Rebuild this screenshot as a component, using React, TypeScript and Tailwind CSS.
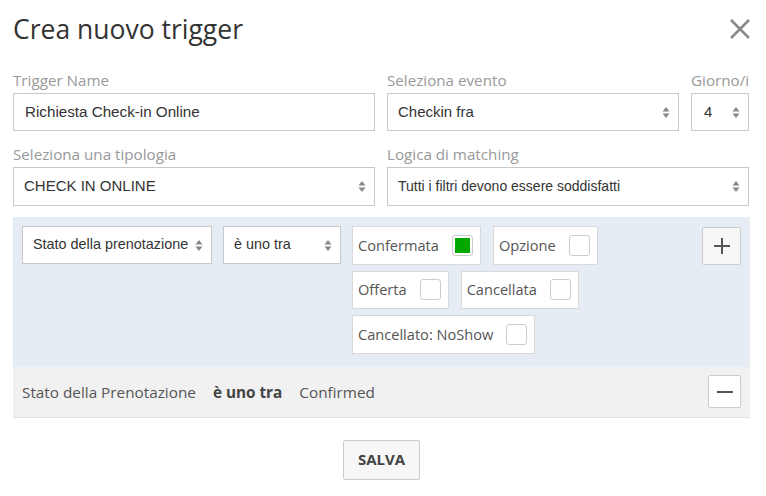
import React from 'react';

const Arrows = () => (
  <svg width="8" height="13" viewBox="0 0 8 13" className="shrink-0">
    <path d="M4 1 L7.5 5.5 H0.5 Z" fill="#888" />
    <path d="M4 12 L7.5 7.5 H0.5 Z" fill="#888" />
  </svg>
);

const FakeSelect: React.FC<{ value: string; className?: string }> = ({ value, className = '' }) => (
  <div
    className={`flex items-center justify-between bg-white border border-[#c8c8c8] pl-[10px] pr-[8px] font-['Liberation_Sans',Arial,sans-serif] text-[#333] whitespace-nowrap ${className}`}
  >
    <span>{value}</span>
    <Arrows />
  </div>
);

const Label: React.FC<{ children: React.ReactNode; className?: string }> = ({ children, className = '' }) => (
  <div className={`text-[15.2px] leading-[22px] text-[#999] mb-[2px] ${className}`}>{children}</div>
);

const Chip: React.FC<{ label: string; checked?: boolean }> = ({ label, checked }) => (
  <div className="flex items-center h-[38.5px] bg-white border border-[#d9d9d9] pl-[5px] pr-[7px] text-[14.6px] text-[#555]">
    <span className="mt-[1px]">{label}</span>
    <span className="ml-[13px] w-[21px] h-[21px] rounded-[3px] border border-[#ccc] bg-white flex items-center justify-center">
      {checked && <span className="w-[15px] h-[15px] bg-[#00a800]" />}
    </span>
  </div>
);

export default function App() {
  const chips = [
    { label: 'Confermata', checked: true },
    { label: 'Opzione' },
    { label: 'Offerta' },
    { label: 'Cancellata' },
    { label: 'Cancellato: NoShow' },
  ];

  return (
    <div className="w-[766px] h-[496px] bg-white font-['Open_Sans',sans-serif] text-[#333]">
      <div className="ml-[13px] w-[737px] pt-[10px]">
        <div className="flex items-center justify-between h-[38px]">
          <h1 className="text-[26.5px] font-normal leading-[38px] text-[#333]">Crea nuovo trigger</h1>
          <svg width="22" height="22" viewBox="0 0 22 22" className="mr-[-1px]">
            <path d="M2 2 L20 20 M20 2 L2 20" stroke="#8a8a8a" strokeWidth="2.6" />
          </svg>
        </div>

        <div className="grid grid-cols-[362px_292px_58px] gap-x-[12px] mt-[21px]">
          <div>
            <Label>Trigger Name</Label>
            <div className="h-[38px] flex items-center border border-[#c8c8c8] pl-[11px] font-['Liberation_Sans',Arial,sans-serif] text-[15.2px] text-[#333]">
              Richiesta Check-in Online
            </div>
          </div>
          <div>
            <Label>Seleziona evento</Label>
            <FakeSelect value="Checkin fra" className="h-[38px] text-[15px]" />
          </div>
          <div>
            <Label className="text-right">Giorno/i</Label>
            <FakeSelect value="4" className="h-[38px] pl-[12px] text-[15px]" />
          </div>
        </div>

        <div className="grid grid-cols-[362px_362px] gap-x-[12px] mt-[12px]">
          <div>
            <Label>Seleziona una tipologia</Label>
            <FakeSelect value="CHECK IN ONLINE" className="h-[39px] text-[15px]" />
          </div>
          <div>
            <Label>Logica di matching</Label>
            <FakeSelect value="Tutti i filtri devono essere soddisfatti" className="h-[39px] text-[14px]" />
          </div>
        </div>

        <div className="mt-[11px] bg-[#e6ecf4] pt-[9px] pb-[13px] pl-[9px] pr-[9px] flex items-start">
          <FakeSelect value="Stato della prenotazione" className="h-[38px] w-[190px] pr-[7px] text-[14.4px]" />
          <FakeSelect value="è uno tra" className="h-[38px] w-[118px] ml-[11px] text-[14.4px]" />
          <div className="ml-[11px] w-[340px] flex flex-wrap gap-x-[12px] gap-y-[6px]">
            {chips.map((c) => (
              <Chip key={c.label} label={c.label} checked={c.checked} />
            ))}
          </div>
          <button className="ml-auto mt-[1px] w-[39px] h-[38px] bg-[#f7f7f7] border border-[#ccc] rounded-[2px] flex items-center justify-center">
            <svg width="18" height="18" viewBox="0 0 18 18">
              <path d="M9 1 V17 M1 9 H17" stroke="#555" strokeWidth="2" />
            </svg>
          </button>
        </div>

        <div className="h-[51px] bg-[#f1f1f1] border-b border-[#e0e0e0] flex items-center pl-[9px] pr-[9px] text-[15.3px] text-[#555]">
          <span className="mt-[2px]">Stato della Prenotazione</span>
          <span className="mt-[2px] ml-[17px] font-bold text-[#444]">è uno tra</span>
          <span className="mt-[2px] ml-[17px]">Confirmed</span>
          <button className="ml-auto w-[33px] h-[33px] bg-white border border-[#ccc] rounded-[2px] flex items-center justify-center">
            <svg width="18" height="4" viewBox="0 0 18 4">
              <path d="M1 2 H17" stroke="#555" strokeWidth="2" />
            </svg>
          </button>
        </div>

        <div className="flex justify-center mt-[22px]">
          <button className="h-[40px] px-[14px] bg-[#f7f7f7] border border-[#ccc] rounded-[2px] text-[15px] font-bold text-[#444]">
            SALVA
          </button>
        </div>
      </div>
    </div>
  );
}
